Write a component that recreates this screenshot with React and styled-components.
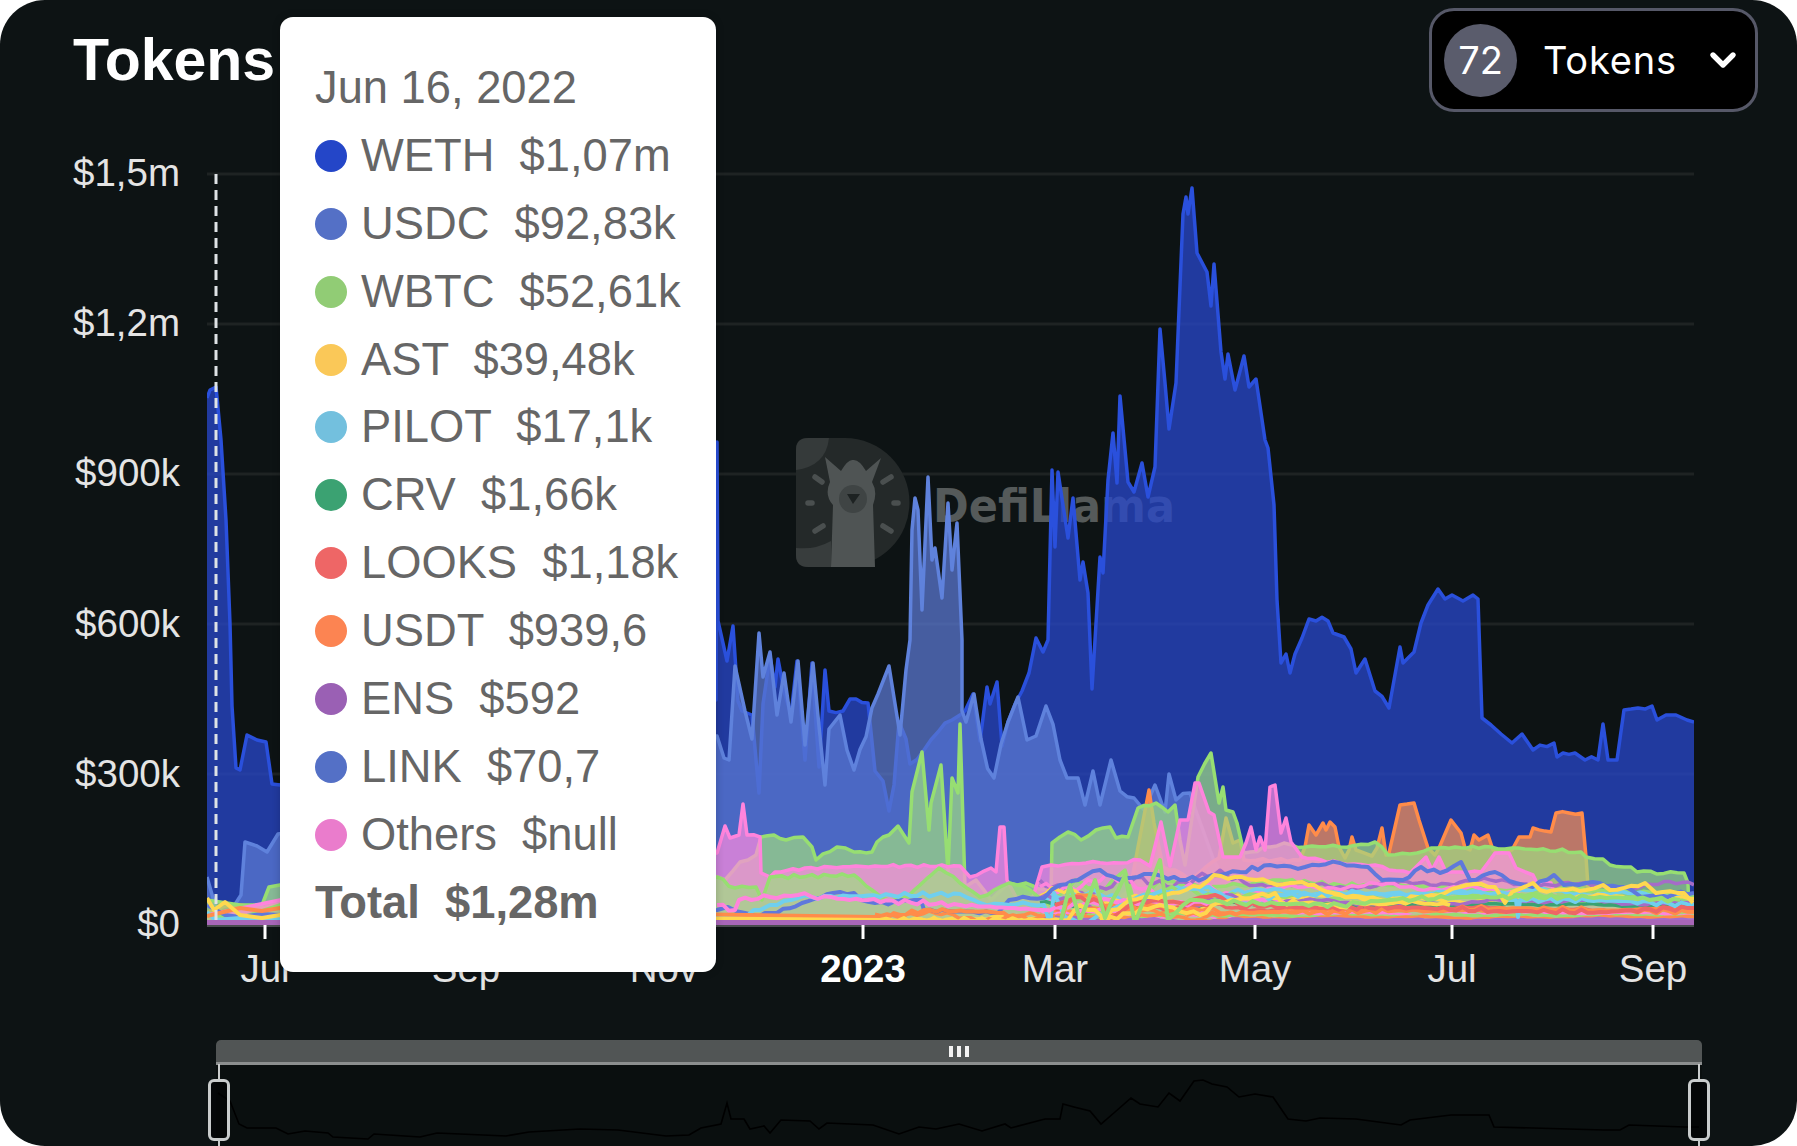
import React from "react";
import styled, { createGlobalStyle } from "styled-components";
import { ChevronDown } from "lucide-react";

const GlobalStyle = createGlobalStyle`
html,body{
    margin:0;
    background:#fff;
}
`;

const Panel = styled.div`
position:relative;
width:1797px;
height:1146px;
background:#0d1314;
border-radius:45px;
overflow:hidden;
font-family:"Liberation Sans",Arial,sans-serif;
`;

const Header = styled.div`
display:flex;
justify-content:space-between;
align-items:flex-start;
height:112px;
padding:8px 39px 0 73px;
box-sizing:border-box;
`;

const Title = styled.h1`
margin:23px 0 0 0;
font-size:59px;
line-height:1;
font-weight:700;
color:#fff;
`;

const Dropdown = styled.div`
display:flex;
align-items:center;
width:329px;
height:104px;
padding:0 12px 0 12px;
box-sizing:border-box;
background:#000;
border:3px solid #565868;
border-radius:25px;
font-family:Inter,"Liberation Sans",sans-serif;
font-size:38px;
color:#fff;
`;

const Count = styled.span`
display:flex;
align-items:center;
justify-content:center;
flex:0 0 73px;
height:73px;
border-radius:50%;
background:#5a5c6c;
`;

const DropdownLabel = styled.span`
margin-left:26px;
flex:1;
letter-spacing:.8px;
`;

const ChartRow = styled.div`
display:flex;
margin-top:40px;
`;

const YAxis = styled.div`
display:flex;
flex-direction:column;
justify-content:space-between;
width:207px;
height:795px;
margin-top:-1px;
padding-right:27px;
box-sizing:border-box;
`;

const AxisLabel = styled.span`
font-size:38.5px;
line-height:44px;
color:${p => p.$strong ? "#fff" : "#e4e4e4"};
font-weight:${p => p.$strong ? 700 : 400};
`;

const YLabel = styled(AxisLabel)`
text-align:right;
`;

const Plot = styled.svg`
display:block;
width:1487px;
height:794px;
`;

const XAxis = styled.div`
display:flex;
padding-left:165px;
height:44px;
margin-top:1px;
`;

const XLabel = styled(AxisLabel)`
flex:0 0 ${p => p.$w}px;
text-align:center;
`;

const Track = styled.div`
display:flex;
align-items:center;
justify-content:center;
gap:4px;
width:1486px;
height:25px;
margin:49px 0 0 216px;
box-sizing:border-box;
background:#515555;
border-bottom:3px solid #8c8f8f;
border-radius:5px 5px 0 0;
`;

const Grip = styled.i`
width:4px;
height:11px;
background:#f2f2f2;
`;

const Mini = styled.div`
position:relative;
width:1486px;
height:81px;
margin-left:216px;
background:#0a0f0f;
`;

const MiniSvg = styled.svg`
display:block;
width:1486px;
height:82px;
`;

const Handle = styled.div`
position:absolute;
top:14px;
${p => p.$side}:-8px;
width:22px;
height:62px;
box-sizing:border-box;
background:rgba(0,0,0,.6);
border:3px solid #c9cccc;
border-radius:6px;
&::before,&::after{
    content:"";
    position:absolute;
    left:50%;
    width:2px;
    margin-left:-1px;
    background:#c9cccc;
}
&::before{
    top:-18px;
    height:15px;
}
&::after{
    bottom:-10px;
    height:7px;
}
`;

const Tooltip = styled.div`
position:absolute;
left:280px;
top:17px;
width:436px;
height:955px;
padding:37px 0 0 35px;
box-sizing:border-box;
background:#fff;
border-radius:13px;
box-shadow:0 0 8px rgba(0,0,0,.2);
color:#666;
font-size:45.3px;
`;

const TipRow = styled.div`
display:flex;
align-items:center;
height:67.9px;
white-space:pre;
font-weight:${p => p.$bold ? 700 : 400};
`;

const Dot = styled.span`
flex:0 0 32px;
height:32px;
margin-right:14px;
border-radius:50%;
background:${p => p.$color};
`;

const tipRows = [
    ["WETH", "$1,07m", "#2446c8"],
    ["USDC", "$92,83k", "#5470c6"],
    ["WBTC", "$52,61k", "#91cc75"],
    ["AST", "$39,48k", "#fac858"],
    ["PILOT", "$17,1k", "#73c0de"],
    ["CRV", "$1,66k", "#3ba272"],
    ["LOOKS", "$1,18k", "#ee6666"],
    ["USDT", "$939,6", "#fc8452"],
    ["ENS", "$592", "#9a60b4"],
    ["LINK", "$70,7", "#5470c6"],
    ["Others", "$null", "#ea7ccc"],
];

const yLabels = ["$1,5m", "$1,2m", "$900k", "$600k", "$300k", "$0"];
const gridYs = [174, 324, 474, 624, 774];
const xLabels = [
    ["Jul", 200], ["Sep", 202], ["Nov", 194], ["2023", 204, true],
    ["Mar", 180], ["May", 220], ["Jul", 174], ["Sep", 228],
];
const tickXs = [265, 466, 664, 863, 1055, 1255, 1452, 1653];

const BASE = 924;

const noise = x => (Math.sin(x * 1.7) + Math.sin(x * .63 + 1)) / 2;

// breaks long segments up so the traced lines get the small jitter of real price data
const rough = (a, amp, from = 717) => {
    const out = [];
    for (let i = 0; i < a.length - 2; i += 2) {
        const [x0, y0, x1, y1] = [a[i], a[i + 1], a[i + 2], a[i + 3]];
        out.push(x0, y0);
        if (x0 < from) continue;
        const n = Math.floor((x1 - x0) / 6);
        for (let k = 1; k < n; k++) {
            const x = x0 + (x1 - x0) * k / n;
            out.push(x, Math.min(BASE, y0 + (y1 - y0) * k / n + amp * noise(x)));
        }
    }
    out.push(a[a.length - 2], a[a.length - 1]);
    return out;
};

const band = (x0, x1, base, amp, seed) => {
    const out = [];
    for (let x = x0; x <= x1; x += 6) {
        const wild = x < 1240 ? 2.4 : 1;
        const y = base + wild * amp * (Math.sin(x * .07 + seed) + Math.sin(x * .023 + seed * 2) + .6 * Math.sin(x * .31 + seed * 3)) / 2.6;
        out.push(x, Math.min(BASE, y));
    }
    return out;
};

const weth = [207,398,210,390,216,387,221,440,226,520,230,624,232,706,236,768,240,770,247,735,257,740,266,742,272,784,280,785,500,700,716,700,717,442,718,621,727,661,733,626,738,701,742,711,752,715,759,793,763,704,770,656,775,687,778,659,784,691,791,715,797,661,805,760,812,663,819,767,825,670,829,711,843,711,850,699,868,703,875,771,883,781,889,811,894,785,899,722,906,739,910,764,924,750,938,732,952,720,960,715,965,711,973,694,980,741,987,687,990,704,997,682,1002,746,1008,722,1022,691,1029,673,1036,638,1043,652,1048,640,1052,470,1055,547,1058,472,1068,538,1073,498,1080,580,1083,562,1088,593,1092,689,1095,640,1100,557,1103,573,1108,480,1113,433,1117,483,1120,396,1128,482,1134,492,1142,463,1148,497,1155,467,1160,329,1165,383,1169,429,1176,383,1183,214,1186,197,1188,214,1192,188,1197,253,1207,272,1211,306,1214,264,1221,352,1225,379,1228,354,1235,390,1244,356,1249,387,1256,379,1265,440,1268,448,1274,505,1277,600,1281,663,1286,654,1290,673,1295,654,1302,638,1309,619,1316,621,1328,621,1333,633,1344,637,1351,649,1356,673,1365,659,1375,691,1389,708,1400,647,1403,663,1414,652,1421,623,1428,605,1438,589,1445,599,1452,595,1463,601,1473,595,1478,599,1482,718,1491,725,1501,734,1512,743,1522,734,1533,750,1554,743,1557,757,1575,753,1585,760,1598,760,1603,724,1608,760,1617,760,1624,710,1638,708,1652,706,1657,720,1666,715,1676,715,1687,720,1694,722];

const usdc = [207,877,215,905,225,915,234,906,241,895,245,842,257,846,267,852,278,834,500,800,717,736,724,758,729,760,735,666,745,711,752,739,759,633,763,677,770,652,777,715,784,673,791,722,798,661,805,745,813,663,825,785,829,729,840,715,854,770,878,694,889,666,900,735,906,670,910,640,912,530,915,498,918,510,922,610,928,477,932,560,935,548,942,598,948,503,952,570,957,523,962,640,962,711,966,722,974,694,981,739,994,778,1008,722,1018,697,1027,740,1036,736,1046,706,1060,760,1067,778,1078,778,1085,805,1093,771,1100,805,1111,760,1120,791,1134,798,1144,810,1155,785,1165,812,1169,774,1176,800,1190,793,1204,833,1214,861,1240,890,1300,905,1694,915];

const orange = [207,912,225,906,240,905,262,908,280,904,717,922,875,920,900,915,924,910,991,912,1040,918,1100,912,1130,890,1138,847,1149,790,1154,823,1163,867,1175,870,1190,880,1219,858,1226,818,1233,843,1240,840,1244,860,1300,860,1305,847,1309,825,1316,835,1323,823,1326,830,1330,822,1335,827,1339,847,1345,858,1349,850,1352,837,1356,850,1372,856,1377,848,1382,828,1386,855,1389,853,1400,805,1414,803,1419,820,1428,848,1435,855,1439,848,1451,820,1461,833,1465,848,1470,850,1474,835,1479,840,1488,835,1493,850,1512,850,1519,837,1530,837,1533,828,1551,832,1556,813,1582,813,1586,857,1588,887,1600,912,1694,914];

const green1 = [207,900,240,905,262,905,269,887,280,885,500,880,717,877,725,880,740,862,756,855,761,837,774,835,786,840,803,837,812,847,816,860,837,847,854,852,872,852,877,842,889,835,898,826,909,843,912,792,922,752,929,830,931,803,941,765,948,872,952,778,958,793,960,724,965,887,976,880,991,900,1009,883,1026,883,1051,893,1052,843,1068,832,1081,840,1096,830,1110,827,1116,838,1128,837,1138,808,1156,803,1168,812,1175,805,1180,840,1185,865,1198,777,1211,753,1219,803,1223,787,1226,810,1233,812,1237,823,1244,853,1270,847,1284,843,1305,847,1340,847,1375,842,1388,855,1417,853,1431,848,1491,847,1512,848,1581,852,1586,857,1603,859,1610,865,1631,867,1637,872,1684,873,1688,883,1689,917,1694,900];

const pink = [207,915,280,900,717,853,725,826,730,838,739,835,743,804,747,835,760,837,761,873,770,877,775,872,805,868,875,866,960,866,970,877,991,868,996,872,1000,827,1004,827,1007,880,1016,897,1033,897,1042,867,1051,865,1086,863,1121,863,1140,860,1150,866,1161,822,1170,866,1180,820,1188,820,1195,783,1199,783,1209,812,1214,815,1223,857,1240,857,1246,843,1251,827,1256,850,1260,837,1265,850,1270,787,1275,785,1281,833,1286,818,1291,842,1302,857,1340,863,1375,865,1389,870,1410,873,1426,857,1432,870,1439,857,1446,872,1481,872,1495,853,1509,853,1516,868,1533,875,1537,883,1551,883,1558,903,1694,918];

const green2 = [207,915,240,918,280,905,717,877,735,888,756,887,762,900,770,877,854,875,872,890,889,900,907,897,939,868,960,883,980,897,1009,883,1030,890,1050,905,1075,880,1100,892,1125,870,1135,905,1160,880,1200,887,1240,885,1280,880,1340,885,1400,885,1500,890,1600,890,1694,895];

const series = [
    { pts: rough(weth, 4), line: "#2a50dc", fill: "#2848cd", op: .75 },
    { pts: rough(usdc, 11), line: "#5f82dc", fill: "#5a78d1", op: .74 },
    { pts: rough(orange, 1.5), line: "#ff8c4a", fill: "#fd9251", op: .7 },
    { pts: rough(green1, 2), line: "#97de72", fill: "#a0db82", op: .7 },
    { pts: rough(pink, 1.5), line: "#ff84dc", fill: "#ff8ae0", op: .7 },
    { pts: rough(green2, 2), line: "#97de72", fill: "#a0db82", op: .7 },
];

// busy low value tokens along the bottom of the chart
const bands = [
    ["#a56cc8", 1040, 1694, 884, 6, 1.1],
    ["#ff84dc", 1040, 1520, 888, 6, 2.3],
    ["#70cfee", 1040, 1694, 893, 5, 3.7],
    ["#97de72", 1040, 1694, 897, 5, 4.2],
    ["#ffd84f", 1040, 1694, 899, 5, 5.9],
    ["#3ba272", 1040, 1694, 905, 2, .4],
    ["#a56cc8", 1040, 1694, 902, 4, 6.6],
    ["#ee6666", 1040, 1694, 909, 3, 7.7],
    ["#ff8c4a", 1040, 1694, 911, 3, 8.3],
    ["#ff84dc", 1040, 1694, 914, 3, 9.1],
    ["#97de72", 1040, 1694, 916, 2, 10.4],
    ["#ff8c4a", 1040, 1694, 918, 2, 11.5],
    ["#a56cc8", 1040, 1694, 920, 1.5, 12.2],
    ["#ffd84f", 717, 1040, 920, 2, 3.3],
    ["#ff8c4a", 875, 1060, 915, 3, 1.9],
];

// thin lines that run over the filled areas
const traced = [
    ["#5f78dc", [207,905,225,915,240,917,262,914,280,915,500,915,717,910,728,907,745,913,753,915,777,913,802,903,833,893,840,892,854,893,861,900,875,903,921,900,924,910,998,913,1009,900,1044,898,1060,885,1078,880,1100,870,1120,880,1150,874,1180,880,1205,878,1240,872,1270,865,1305,867,1340,863,1368,867,1382,880,1403,880,1421,867,1440,873,1461,862,1470,880,1495,872,1516,883,1533,887,1554,875,1564,885,1586,883,1626,887,1641,897,1694,893]],
    ["#70cfee", [207,912,215,920,240,918,735,917,760,910,770,905,798,898,812,897,960,894,980,903,1009,905,1044,905,1050,924,1054,893,1065,917,1082,924,1138,897,1156,893,1209,887,1226,897,1250,905,1280,895,1358,893,1393,893,1445,895,1480,892,1501,897,1516,900,1518,917,1520,900,1600,900,1694,905]],
    ["#ff84dc", [717,905,735,910,739,900,770,897,798,895,844,899,868,900,960,905,1044,910,1110,900,1150,905,1250,900,1300,905]],
    ["#ff8c4a", [207,916,240,908,262,911,280,908,875,917,900,915,924,910,991,912,1060,924,1066,905,1078,895,1100,900,1110,915,1150,905,1200,915,1260,912,1340,912,1400,910,1500,908,1600,910,1694,912]],
    ["#ee6666", [1055,905,1075,897,1100,902,1112,918,1140,900,1180,903,1215,895,1240,905,1320,908,1400,907,1500,911,1600,912,1694,908]],
    ["#ffd84f", [207,898,214,910,225,902,240,915,262,918,280,915,880,920,1000,920,1068,920,1080,905,1095,910,1105,920,1160,905,1200,915,1218,903,1275,893,1281,902,1305,903,1340,907,1358,903,1393,903,1417,897,1445,893,1467,885,1495,887,1505,903,1512,892,1533,883,1540,890,1586,890,1603,885,1610,890,1645,883,1656,893,1684,893,1693,903]],
    ["#ffd84f", [1100,920,1130,900,1165,895,1200,887,1214,875,1235,877,1256,880,1277,885,1302,882,1333,893,1380,900,1450,905]],
    ["#97de72", [1060,924,1070,885,1080,920,1095,880,1105,918,1125,875,1135,924,1160,860,1168,920,1190,900,1240,903,1340,905,1390,900,1460,897,1600,897,1680,900]],
];

const mini = [218,1092,230,1100,239,1123,247,1127,276,1127,288,1133,305,1130,328,1132,333,1136,368,1138,374,1133,420,1136,437,1132,506,1135,529,1131,580,1128,618,1129,666,1135,689,1134,701,1127,721,1123,727,1102,731,1118,744,1118,750,1128,764,1125,770,1132,781,1119,810,1120,819,1128,827,1122,873,1124,899,1133,919,1126,936,1128,959,1123,982,1130,1005,1123,1011,1127,1045,1118,1060,1118,1063,1103,1074,1106,1090,1110,1101,1123,1115,1111,1131,1097,1140,1103,1158,1106,1169,1092,1180,1100,1194,1080,1203,1079,1212,1083,1227,1086,1239,1096,1255,1093,1273,1096,1288,1118,1306,1120,1320,1117,1356,1118,1401,1124,1410,1119,1451,1114,1489,1114,1494,1126,1604,1129,1620,1129,1629,1124,1685,1126,1699,1126];

const toPath = a => {
    let d = "";
    for (let i = 0; i < a.length; i += 2) d += (i ? "L" : "M") + a[i].toFixed(1) + " " + a[i + 1].toFixed(1);
    return d;
};
const toArea = a => toPath(a) + `L${a[a.length - 2]} ${BASE}L${a[0]} ${BASE}Z`;

function Watermark() {
    return (
        <g>
            <path d="M808 438H845A64.5 64.5 0 0 1 845 567H808Q796 567 796 555V450Q796 438 808 438Z" fill="#242929" />
            <path d="M808 438H829Q826 466 796 470V450Q796 438 808 438Z" fill="#353a3a" />
            <path d="M796 548Q815 550 831 541V567H808Q796 567 796 555Z" fill="#383d3d" />
            <path d="M825 457L841 471Q848 459 853 460Q859 459 866 471L881 458L872 482Q878 492 873 505L875 567H831L833 505Q824 495 830 482Z" fill="#4f5454" />
            <circle cx="853" cy="499" r="14" fill="#3f4444" />
            <path d="M847 494H860L853 504Z" fill="#1d2222" />
            <g stroke="#4a4f4f" strokeWidth="5.5" strokeLinecap="round">
                <path d="M815 477L822 482M883 482L891 477M808 503H812M894 503H898M815 531L823 526M883 526L891 531" />
            </g>
            <text x="933" y="522" fontFamily="DejaVu Sans" fontWeight="700" fontSize="46" textLength="242" lengthAdjust="spacingAndGlyphs" fill="#555a5a">DefiLlama</text>
        </g>
    );
}

function App() {
    return (
        <Panel>
            <GlobalStyle />
            <Header>
                <Title>Tokens</Title>
                <Dropdown>
                    <Count>72</Count>
                    <DropdownLabel>Tokens</DropdownLabel>
                    <ChevronDown size={40} strokeWidth={3.2} />
                </Dropdown>
            </Header>
            <ChartRow>
                <YAxis>
                    {yLabels.map(l => <YLabel key={l}>{l}</YLabel>)}
                </YAxis>
                <Plot viewBox="207 152 1487 794">
                    {gridYs.map(y => <path key={y} d={`M207 ${y}H1694`} stroke="#1e2323" strokeWidth="3" />)}
                    <Watermark />
                    {series.map((s, i) => (
                        <g key={i}>
                            <path d={toArea(s.pts)} fill={s.fill} fillOpacity={s.op} />
                            <path d={toPath(s.pts)} fill="none" stroke={s.line} strokeWidth="3.5" strokeLinejoin="round" />
                        </g>
                    ))}
                    {bands.map(([c, x0, x1, y, amp, seed], i) => (
                        <path key={i} d={toPath(band(x0, x1, y, amp, seed))} fill="none" stroke={c} strokeWidth="3.5" strokeLinejoin="round" />
                    ))}
                    {traced.map(([c, pts], i) => (
                        <path key={i} d={toPath(rough(pts, 2.5))} fill="none" stroke={c} strokeWidth="4" strokeLinejoin="round" />
                    ))}
                    <path d="M207 922.5H1694" stroke="#a866b8" strokeWidth="5" />
                    <path d="M207 926H1694" stroke="#4a4d4f" strokeWidth="2" />
                    {tickXs.map(x => <path key={x} d={`M${x} 925V939`} stroke="#fff" strokeWidth="3" />)}
                    <path d="M216 174V924" stroke="#dfe3e6" strokeWidth="3" strokeDasharray="10 6" />
                </Plot>
            </ChartRow>
            <XAxis>
                {xLabels.map(([l, w, strong], i) => <XLabel key={i} $w={w} $strong={strong}>{l}</XLabel>)}
            </XAxis>
            <Track>
                <Grip /><Grip /><Grip />
            </Track>
            <Mini>
                <MiniSvg viewBox="216 1064 1486 82">
                    <path d={toPath(mini)} fill="none" stroke="#000" strokeWidth="1.6" />
                </MiniSvg>
                <Handle $side="left" />
                <Handle $side="right" />
            </Mini>
            <Tooltip>
                <TipRow>Jun 16, 2022</TipRow>
                {tipRows.map(([name, value, color]) => (
                    <TipRow key={name}>
                        <Dot $color={color} />
                        {name}{"  "}{value}
                    </TipRow>
                ))}
                <TipRow $bold>Total{"  "}$1,28m</TipRow>
            </Tooltip>
        </Panel>
    );
}

export default App;
